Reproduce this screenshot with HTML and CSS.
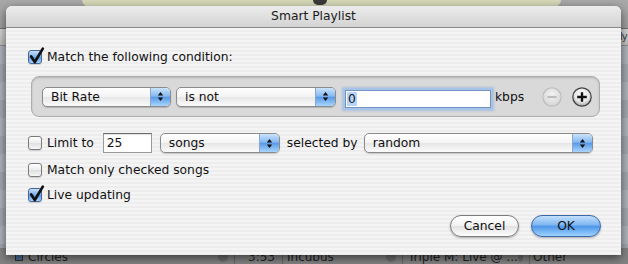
FILE: index.html
```html
<!DOCTYPE html>
<html lang="en">
<head>
    <meta charset="UTF-8">
    <title>Smart Playlist</title>
    <link rel="stylesheet" href="styles.css">
</head>
<body>
<div class="desk">
    <div class="lcd-bar"><div class="lcd"><span class="lcd-logo"></span></div></div>
    <div class="list-head"><span class="head-cell">ly</span></div>
    <div class="list">
        <div class="track">
            <span class="mini-check"></span>
            <span class="cell c-name">Circles <i class="go"></i></span>
            <span class="cell c-time">3:53</span>
            <span class="cell c-artist">Incubus <i class="go"></i></span>
            <span class="cell c-album">Triple M: Live @ ... <i class="go"></i></span>
            <span class="cell c-genre">Other</span>
        </div>
    </div>

    <div class="dialog">
        <div class="titlebar">Smart Playlist</div>
        <div class="dialog-body">
            <div class="check-row">
                <span class="check on"><svg class="tick" width="14" height="14" viewBox="0 0 14 14"><path d="M3.2 6.4 L6.8 12 L14.8 -1.4" fill="none" stroke="#111" stroke-width="2.7" stroke-linecap="round" stroke-linejoin="round"/></svg></span>
                <span>Match the following condition:</span>
            </div>

            <div class="rule-box">
                <div class="popup w-attr"><span class="popup-label">Bit Rate</span><span class="popup-arrows"><svg width="7" height="11" viewBox="0 0 7 11"><path d="M3.5 1 L6.2 4.4 H0.8 Z M0.8 6.6 H6.2 L3.5 10 Z" fill="#111"/></svg></span></div>
                <div class="popup w-op"><span class="popup-label">is not</span><span class="popup-arrows"><svg width="7" height="11" viewBox="0 0 7 11"><path d="M3.5 1 L6.2 4.4 H0.8 Z M0.8 6.6 H6.2 L3.5 10 Z" fill="#111"/></svg></span></div>
                <div class="field focused w-value"><span class="sel">0</span></div>
                <span class="unit">kbps</span>
                <svg class="round-btn minus" width="20" height="20" viewBox="0 0 20 20">
                    <defs><radialGradient id="mg" cx="50%" cy="40%" r="60%"><stop offset="0" stop-color="#f4f4f4"/><stop offset="1" stop-color="#d4d4d4"/></radialGradient></defs>
                    <circle cx="10" cy="10" r="9.2" fill="url(#mg)" stroke="#bcbcbc" stroke-width="1.1"/>
                    <path d="M5.5 10h9" stroke="#bdbdbd" stroke-width="2.2"/>
                </svg>
                <svg class="round-btn plus" width="20" height="20" viewBox="0 0 20 20">
                    <defs><radialGradient id="pg" cx="50%" cy="38%" r="62%"><stop offset="0" stop-color="#ffffff"/><stop offset=".65" stop-color="#e6e6e6"/><stop offset="1" stop-color="#9c9c9c"/></radialGradient></defs>
                    <circle cx="10" cy="10" r="9.2" fill="url(#pg)" stroke="#404040" stroke-width="1.2"/>
                    <path d="M10 5.2v9.6M5.2 10h9.6" stroke="#111" stroke-width="2.4"/>
                </svg>
            </div>

            <div class="limit-row">
                <span class="check"></span>
                <span class="lbl">Limit to</span>
                <div class="field w-limit">25</div>
                <div class="popup w-songs"><span class="popup-label">songs</span><span class="popup-arrows"><svg width="7" height="11" viewBox="0 0 7 11"><path d="M3.5 1 L6.2 4.4 H0.8 Z M0.8 6.6 H6.2 L3.5 10 Z" fill="#111"/></svg></span></div>
                <span class="lbl sel-by">selected by</span>
                <div class="popup w-random"><span class="popup-label">random</span><span class="popup-arrows"><svg width="7" height="11" viewBox="0 0 7 11"><path d="M3.5 1 L6.2 4.4 H0.8 Z M0.8 6.6 H6.2 L3.5 10 Z" fill="#111"/></svg></span></div>
            </div>

            <div class="check-row small-gap">
                <span class="check"></span>
                <span>Match only checked songs</span>
            </div>

            <div class="check-row small-gap">
                <span class="check on"><svg class="tick" width="14" height="14" viewBox="0 0 14 14"><path d="M3.2 6.4 L6.8 12 L14.8 -1.4" fill="none" stroke="#111" stroke-width="2.7" stroke-linecap="round" stroke-linejoin="round"/></svg></span>
                <span>Live updating</span>
            </div>

            <div class="btn-holder">
                <button class="aqua-btn cancel-btn">Cancel</button>
                <button class="aqua-btn ok-btn">OK</button>
            </div>
        </div>
    </div>
</div>
</body>
</html>
```

FILE: styles.css
```css
* {
    box-sizing: border-box;
    margin: 0;
    padding: 0;
}

body {
    font-family: "DejaVu Sans", sans-serif;
    font-size: 12.3px;
    color: #111;
}

/* the iTunes window under the sheet */
.desk {
    position: relative;
    width: 628px;
    height: 264px;
    overflow: hidden;
    background: #a4a4a4;
    display: flex;
    flex-direction: column;
}

.lcd-bar {
    height: 29px;
    padding-left: 82px;
    background: linear-gradient(#a9a9a9, #9d9d9d);
    border-bottom: 1px solid #6f6f6f;
}

.lcd {
    width: 479px;
    height: 10px;
    background: #d6d8b8;
    border-radius: 0 0 22px 22px / 0 0 12px 12px;
    display: flex;
    justify-content: center;
}

.lcd-logo {
    width: 14px;
    height: 5px;
    margin-right: 4px;
    background: #3a3a3a;
    border-radius: 0 0 7px 7px;
}

.list-head {
    height: 17px;
    background: linear-gradient(#d4d4d4, #bdbdbd);
    border-bottom: 1px solid #8d8d8d;
    color: #444;
    font-size: 10px;
    line-height: 16px;
}

.head-cell {
    display: block;
    margin-left: 620px;
    letter-spacing: -1px;
}

.list {
    flex: 1;
    display: flex;
    flex-direction: column;
    background: repeating-linear-gradient(#aeb3ba 0 18px, #a2a7ae 18px 36px);
}

.track {
    margin-top: auto;
    margin-bottom: -2px;
    height: 18px;
    display: flex;
    align-items: center;
    background: #838383;
    color: #222;
    font-size: 12px;
    line-height: 18px;
}

.mini-check {
    width: 8px;
    height: 8px;
    margin-left: 15px;
    background: #4d6e9c;
    border: 1px solid #333;
}

.cell {
    display: flex;
    align-items: center;
    height: 18px;
    white-space: nowrap;
    border-right: 1px solid #666;
}

.c-name { width: 212px; padding-left: 5px; }
.c-time { width: 48px; justify-content: flex-end; padding-right: 7px; }
.c-artist { width: 120px; padding-left: 4px; }
.c-album { width: 127px; padding-left: 5px; }
.c-genre { border: none; padding-left: 3px; }

.go {
    width: 10px;
    height: 10px;
    margin-left: auto;
    margin-right: 6px;
    border-radius: 50%;
    background: #6d6d6d;
}

/* the sheet */
.dialog {
    position: absolute;
    left: 6px;
    top: 6px;
    width: 615px;
    height: 249px;
    border-radius: 6px 6px 0 0;
    background: repeating-linear-gradient(#ededed 0 2px, #f4f4f4 2px 4px);
    box-shadow: 0 3px 10px rgba(0, 0, 0, 0.55);
    display: flex;
    flex-direction: column;
}

.titlebar {
    height: 22px;
    line-height: 21px;
    text-align: center;
    color: #1b1b1b;
    background: linear-gradient(#ececec, #d3d3d3);
    border-bottom: 1px solid #888;
    border-radius: 6px 6px 0 0;
}

.dialog-body {
    padding: 21px 20px 0 22px;
    display: flex;
    flex-direction: column;
}

.check-row {
    height: 16px;
    display: flex;
    align-items: center;
    gap: 5px;
}

.small-gap {
    margin-top: 9px;
}

.check {
    position: relative;
    flex: none;
    width: 14px;
    height: 14px;
    border: 1px solid #7b7b7b;
    border-radius: 3px;
    background: linear-gradient(#ffffff, #ececec 50%, #dedede 51%, #f7f7f7);
    box-shadow: 0 1px 1px rgba(0, 0, 0, 0.15);
}

.check.on {
    border-color: #44669a;
    background: linear-gradient(#c7e0fb, #7aaee9 50%, #5d98e0 51%, #a9d3fb);
}

.tick {
    position: absolute;
    left: -1px;
    top: -1px;
    overflow: visible;
}

.rule-box {
    margin: 11px 0 0 3px;
    width: 569px;
    height: 41px;
    display: flex;
    align-items: center;
    padding: 0 7px 0 10px;
    background: #d9d9d9;
    border: 1px solid #aeaeae;
    border-radius: 8px;
    box-shadow: inset 0 1px 2px rgba(0, 0, 0, 0.18);
}

.popup {
    flex: none;
    height: 20px;
    display: flex;
    border: 1px solid #8b8b8b;
    border-radius: 5px;
    overflow: hidden;
    background: linear-gradient(#ffffff, #f3f3f3 50%, #e6e6e6 51%, #fbfbfb);
    box-shadow: 0 1px 1px rgba(0, 0, 0, 0.18);
}

.popup-label {
    flex: 1;
    padding-left: 8px;
    line-height: 18px;
}

.popup-arrows {
    width: 20px;
    display: flex;
    align-items: center;
    justify-content: center;
    background: linear-gradient(#cbe3fb, #86b9ef 45%, #5b9be6 52%, #a8d5fd);
    border-left: 1px solid #8aa6d0;
}

.w-attr { width: 129px; }
.w-op { width: 160px; margin-left: 5px; }
.w-songs { width: 120px; margin-left: 8px; }
.w-random { width: 229px; margin-left: 6px; }

.field {
    flex: none;
    height: 20px;
    padding-left: 3px;
    line-height: 18px;
    background: #fff;
    border: 1px solid #9a9a9a;
    border-top-color: #6a6a6a;
    box-shadow: inset 0 1px 1px rgba(0, 0, 0, 0.12);
}

.focused {
    border-color: #7393c2;
    box-shadow: 0 0 0 2px #a6c3e8, 0 0 2px 3px rgba(120, 165, 220, 0.45);
}

.w-value {
    width: 146px;
    height: 18px;
    margin: 4px 0 0 9px;
    line-height: 16px;
    padding-left: 1px;
}

.w-limit {
    width: 49px;
    margin-left: 9px;
}

.sel {
    background: #b6d4fb;
    padding: 0 1px;
}

.unit {
    margin-left: 4px;
}

.round-btn { flex: none; }
.minus { margin-left: auto; }
.plus { margin-left: 10px; }

.limit-row {
    margin-top: 16px;
    height: 20px;
    display: flex;
    align-items: center;
}

.limit-row .lbl {
    margin-left: 5px;
}

.limit-row .sel-by {
    margin-left: 7px;
}

.btn-holder {
    margin-top: 12px;
    display: flex;
    justify-content: flex-end;
    gap: 12px;
}

.aqua-btn {
    height: 22px;
    border-radius: 11px;
    font-family: "DejaVu Sans", sans-serif;
    font-size: 12.3px;
    color: #111;
    box-shadow: 0 1px 2px rgba(0, 0, 0, 0.3);
}

.cancel-btn {
    width: 69px;
    border: 1px solid #7c7c7c;
    background: linear-gradient(#ffffff, #f2f2f2 50%, #e2e2e2 51%, #fdfdfd);
}

.ok-btn {
    width: 70px;
    border: 1px solid #3d68a8;
    background: linear-gradient(#c4e0fc, #7eb6f1 45%, #4e97e9 52%, #9ed3ff);
}
```
